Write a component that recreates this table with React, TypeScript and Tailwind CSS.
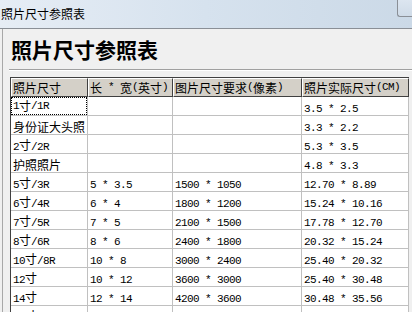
import React from "react";

const headers = ["照片尺寸", "长 * 宽(英寸)", "图片尺寸要求(像素)", "照片实际尺寸(CM)"];

const rows: string[][] = [
  ["1寸/1R", "", "", "3.5 * 2.5"],
  ["身份证大头照", "", "", "3.3 * 2.2"],
  ["2寸/2R", "", "", "5.3 * 3.5"],
  ["护照照片", "", "", "4.8 * 3.3"],
  ["5寸/3R", "5 * 3.5", "1500 * 1050", "12.70 * 8.89"],
  ["6寸/4R", "6 * 4", "1800 * 1200", "15.24 * 10.16"],
  ["7寸/5R", "7 * 5", "2100 * 1500", "17.78 * 12.70"],
  ["8寸/6R", "8 * 6", "2400 * 1800", "20.32 * 15.24"],
  ["10寸/8R", "10 * 8", "3000 * 2400", "25.40 * 20.32"],
  ["12寸", "10 * 12", "3600 * 3000", "25.40 * 30.48"],
  ["14寸", "12 * 14", "4200 * 3600", "30.48 * 35.56"],
  ["16寸", "12 * 16", "4800 * 3600", "30.48 * 40.64"],
];

const widths = ["w-[77px]", "w-[85px]", "w-[129px]", "w-[107px]"];

// split CJK and ascii runs so the ascii part gets the narrow half-width look
const Txt = ({ text }: { text: string }) => {
  const parts = text.split(/([\u3000-\u9fff\uff00-\uffef]+)/).filter((p) => p !== "");
  return (
    <>
      {parts.map((p, i) =>
        /[\u3000-\u9fff\uff00-\uffef]/.test(p) ? (
          <span key={i} className="text-[12px] font-['Noto_Sans_CJK_SC',sans-serif]">
            {p}
          </span>
        ) : (
          <span
            key={i}
            className="text-[11px] tracking-[-0.6px] font-['Liberation_Mono','Noto_Sans_CJK_SC',monospace] whitespace-pre"
          >
            {p}
          </span>
        )
      )}
    </>
  );
};

export default function App() {
  return (
    <div className="relative w-[412px] h-[312px] overflow-hidden bg-[#f0f0f0] text-black font-['Noto_Sans_CJK_SC',sans-serif]">
      {/* title bar */}
      <div className="h-[29px] border-b border-[#8a8f96] bg-gradient-to-r from-[#e6edf5] via-[#d6e2ee] to-[#cbd9e7] flex items-center pl-[1px]">
        <span className="text-[12px] leading-none">照片尺寸参照表</span>
      </div>
      <div className="absolute top-[-4px] left-[397px] w-[24px] h-[21px] border-l border-b border-[#8a8f96] rounded-bl-[3px] bg-gradient-to-b from-[#dfe8f2] to-[#cfdbe8]" />

      {/* window body */}
      <div className="ml-[2px] h-full border-l border-[#a8a8a8] flex flex-col">
        <div className="pl-[8px] pt-[6px] h-[34px]">
          <span className="text-[21px] leading-[28px] font-bold tracking-[0px] font-['Noto_Sans_CJK_SC',serif]">
            照片尺寸参照表
          </span>
        </div>
        <div className="mt-[6px] ml-[6px] border-t border-[#a0a0a0] border-b border-b-white" />

        <div className="mt-[6px] ml-[7px] border-t border-l border-[#404040] bg-white self-start">
          {/* header */}
          <div className="flex">
            {headers.map((h, i) => (
              <div
                key={i}
                className={`${widths[i]} h-[19px] bg-[#d4d0c8] border-t border-l border-white border-r border-b border-r-[#404040] border-b-[#404040] pl-[1px] flex items-center overflow-hidden whitespace-nowrap leading-none`}
              >
                <Txt text={h} />
              </div>
            ))}
          </div>
          {/* rows */}
          {rows.map((r, ri) => (
            <div key={ri} className="flex">
              {r.map((c, ci) => (
                <div
                  key={ci}
                  className={`${widths[ci]} h-[19px] border-r border-b border-[#c0c0c0] flex items-center overflow-hidden whitespace-nowrap leading-none`}
                >
                  {ri === 0 && ci === 0 ? (
                    <div className="w-full h-full border border-dotted border-black flex items-center pl-[1px]">
                      <Txt text={c} />
                    </div>
                  ) : (
                    <div className="pl-[2px]">
                      <Txt text={c} />
                    </div>
                  )}
                </div>
              ))}
            </div>
          ))}
        </div>
      </div>
    </div>
  );
}
